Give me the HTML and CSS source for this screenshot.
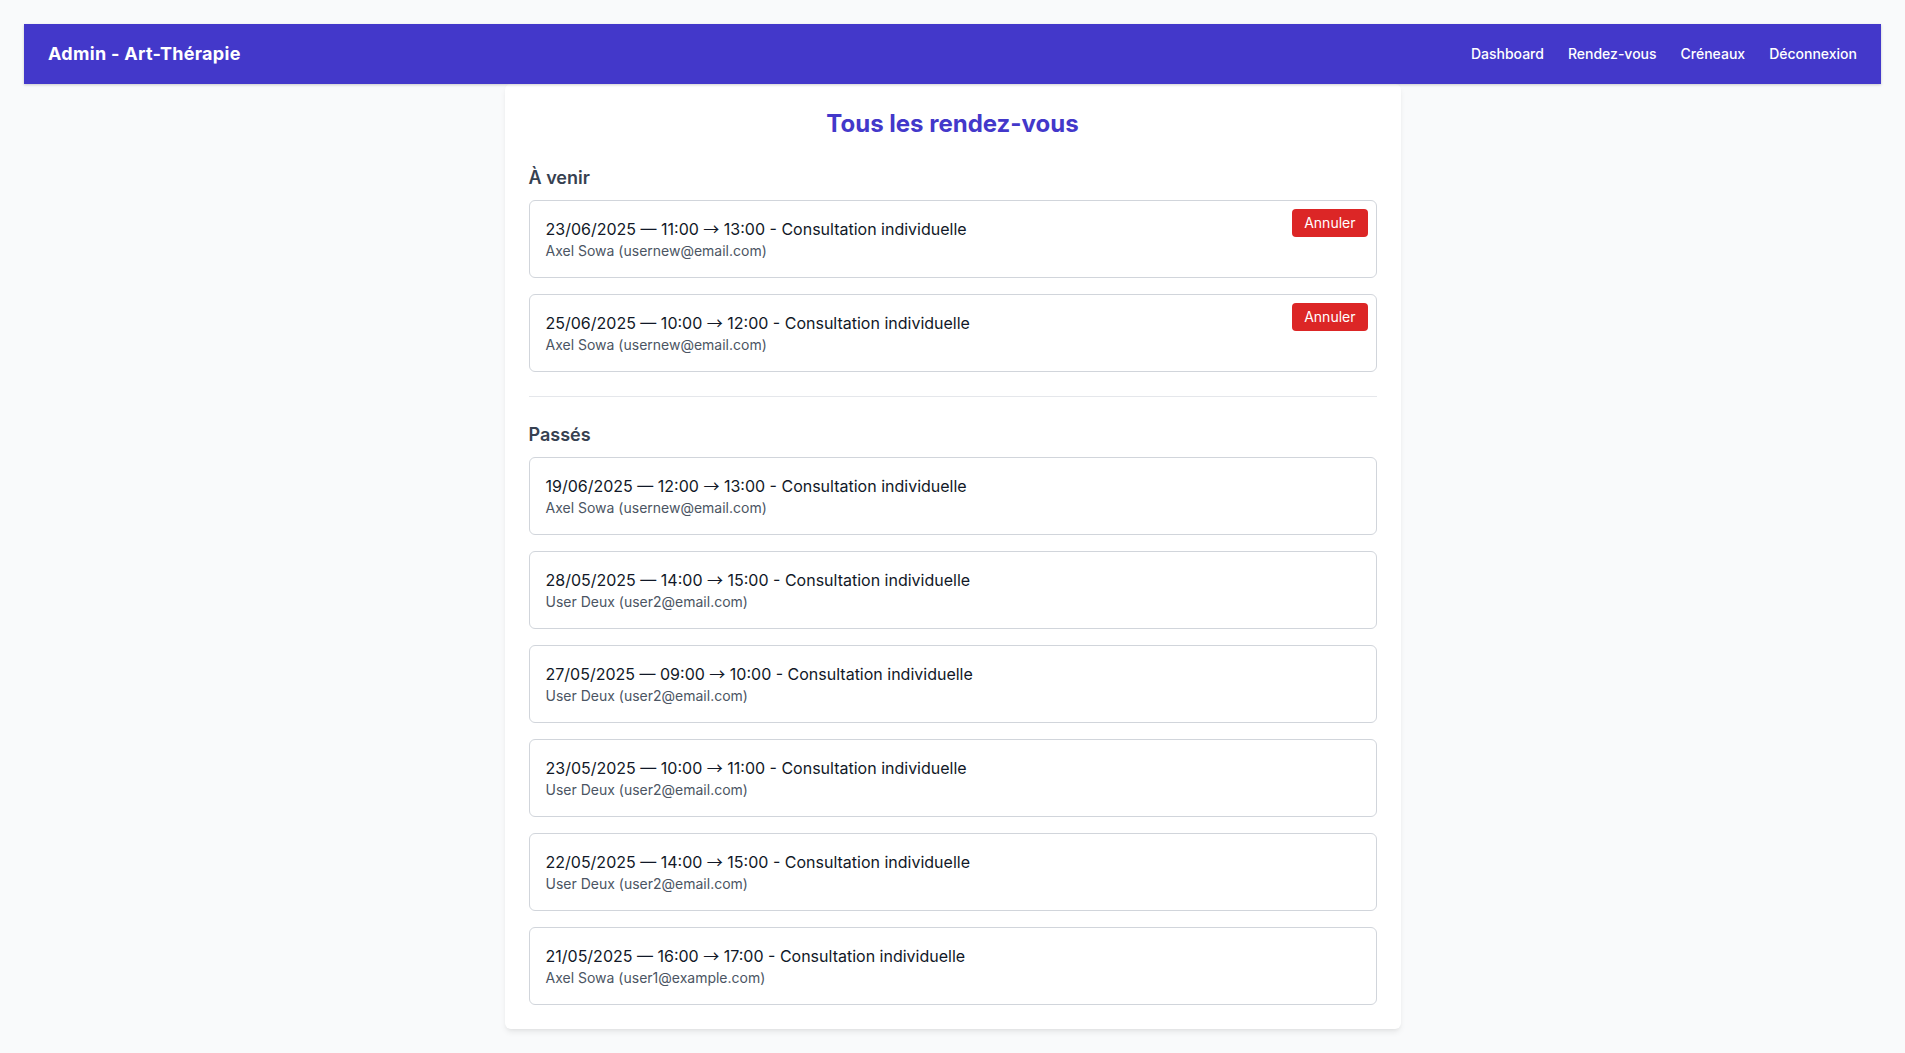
FILE: index.html
```html
<!DOCTYPE html>
<html lang="fr">
<head>
<meta charset="utf-8">
<title>Admin - Art-Thérapie</title>
<link rel="stylesheet" href="styles.css">
</head>
<body>
<header class="topbar">
  <div class="brand">Admin - Art-Thérapie</div>
  <nav class="nav">
    <a href="#">Dashboard</a>
    <a href="#">Rendez-vous</a>
    <a href="#">Créneaux</a>
    <a href="#">Déconnexion</a>
  </nav>
</header>
<main class="panel">
  <h1 class="title">Tous les rendez-vous</h1>
  <section class="section">
    <h2 class="section-title">À venir</h2>
    <ul class="list">
      <li class="item">
        <div class="item-main">23/06/2025 — 11:00 <span class="arrow">→</span> 13:00 - Consultation individuelle</div>
        <div class="item-sub">Axel Sowa (usernew@email.com)</div>
        <button class="cancel">Annuler</button>
      </li>
      <li class="item">
        <div class="item-main">25/06/2025 — 10:00 <span class="arrow">→</span> 12:00 - Consultation individuelle</div>
        <div class="item-sub">Axel Sowa (usernew@email.com)</div>
        <button class="cancel">Annuler</button>
      </li>
    </ul>
  </section>
  <section class="section past">
    <h2 class="section-title">Passés</h2>
    <ul class="list">
      <li class="item">
        <div class="item-main">19/06/2025 — 12:00 <span class="arrow">→</span> 13:00 - Consultation individuelle</div>
        <div class="item-sub">Axel Sowa (usernew@email.com)</div>
      </li>
      <li class="item">
        <div class="item-main">28/05/2025 — 14:00 <span class="arrow">→</span> 15:00 - Consultation individuelle</div>
        <div class="item-sub">User Deux (user2@email.com)</div>
      </li>
      <li class="item">
        <div class="item-main">27/05/2025 — 09:00 <span class="arrow">→</span> 10:00 - Consultation individuelle</div>
        <div class="item-sub">User Deux (user2@email.com)</div>
      </li>
      <li class="item">
        <div class="item-main">23/05/2025 — 10:00 <span class="arrow">→</span> 11:00 - Consultation individuelle</div>
        <div class="item-sub">User Deux (user2@email.com)</div>
      </li>
      <li class="item">
        <div class="item-main">22/05/2025 — 14:00 <span class="arrow">→</span> 15:00 - Consultation individuelle</div>
        <div class="item-sub">User Deux (user2@email.com)</div>
      </li>
      <li class="item">
        <div class="item-main">21/05/2025 — 16:00 <span class="arrow">→</span> 17:00 - Consultation individuelle</div>
        <div class="item-sub">Axel Sowa (user1@example.com)</div>
      </li>
    </ul>
  </section>
</main>
</body>
</html>
```

FILE: styles.css
```css
* { box-sizing: border-box; }
html, body { margin: 0; }
body {
  padding: 24px;
  background: #f9fafb;
  font-family: Inter, "Noto Sans", "Liberation Sans", sans-serif;
  color: #111827;
}
.topbar {
  display: flex;
  align-items: center;
  justify-content: space-between;
  height: 60px;
  padding: 0 24px;
  background: #4338ca;
  color: #fff;
  box-shadow: 0 1px 3px rgba(0,0,0,0.12), 0 1px 2px rgba(0,0,0,0.08);
  position: relative;
  z-index: 1;
}
.brand {
  font-size: 18px;
  line-height: 28px;
  font-weight: 700;
  letter-spacing: 0.3px;
}
.nav {
  display: flex;
  gap: 24px;
}
.nav a {
  color: #fff;
  text-decoration: none;
  font-size: 14px;
  line-height: 20px;
  font-weight: 500;
}
.panel {
  width: 896px;
  margin: 0 auto;
  background: #fff;
  padding: 24px;
  border-radius: 6px;
  box-shadow: 0 4px 6px -1px rgba(0,0,0,0.08), 0 2px 4px -2px rgba(0,0,0,0.06);
}
.title {
  margin: 0 0 24px;
  text-align: center;
  font-size: 24px;
  line-height: 32px;
  font-weight: 700;
  color: #4338ca;
}
.section-title {
  margin: 0 0 8px;
  font-size: 18px;
  line-height: 28px;
  font-weight: 600;
  color: #374151;
}
.past {
  margin-top: 24px;
  padding-top: 24px;
  border-top: 1px solid #e5e7eb;
}
.list {
  list-style: none;
  margin: 0;
  padding: 0;
  display: flex;
  flex-direction: column;
  gap: 16px;
}
.item {
  position: relative;
  border: 1px solid #d1d5db;
  border-radius: 6px;
  padding: 16px;
}
.item-main {
  font-size: 16px;
  line-height: 24px;
  color: #111827;
}
.arrow {
  font-family: "Noto Sans CJK JP", sans-serif;
  line-height: 0;
}
.item-sub {
  font-size: 14px;
  line-height: 20px;
  color: #4b5563;
}
.cancel {
  position: absolute;
  top: 8px;
  right: 8px;
  border: 0;
  border-radius: 4px;
  background: #dc2626;
  color: #fff;
  font-family: inherit;
  font-size: 14px;
  line-height: 20px;
  padding: 4px 12px;
  cursor: pointer;
}
```
